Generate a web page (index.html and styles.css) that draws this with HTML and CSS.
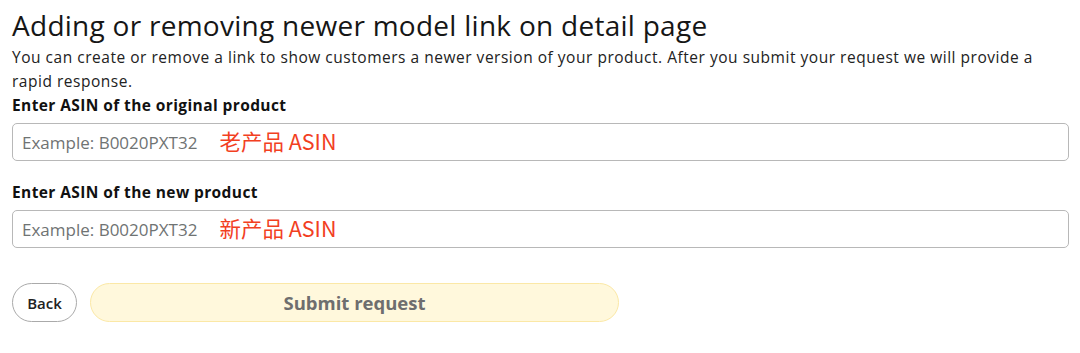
FILE: index.html
```html
<!DOCTYPE html>
<html>
<head>
<meta charset="utf-8">
<link rel="stylesheet" href="styles.css">
</head>
<body>
<div class="page">
  <h1 class="title">Adding or removing newer model link on detail page</h1>
  <p class="intro">You can create or remove a link to show customers a newer version of your product. After you submit your request we will provide a rapid response.</p>
  <div class="field">
    <label class="label">Enter ASIN of the original product</label>
    <div class="input">
      <span class="placeholder">Example: B0020PXT32</span>
      <span class="note">老产品 ASIN</span>
    </div>
  </div>
  <div class="field field-second">
    <label class="label">Enter ASIN of the new product</label>
    <div class="input">
      <span class="placeholder">Example: B0020PXT32</span>
      <span class="note">新产品 ASIN</span>
    </div>
  </div>
  <div class="actions">
    <button class="btn-back">Back</button>
    <button class="btn-submit">Submit request</button>
  </div>
</div>
</body>
</html>
```

FILE: styles.css
```css
html, body {
  margin: 0;
  padding: 0;
  background: #ffffff;
}
.page {
  padding: 7px 11px 0 12px;
  font-family: "Open Sans", "Noto Sans", sans-serif;
  color: #111;
}
.title {
  margin: 0 0 2px;
  font-size: 28px;
  font-weight: 400;
  line-height: 36px;
  letter-spacing: 0.27px;
  color: #161616;
}
.intro {
  margin: 0;
  font-size: 15.5px;
  line-height: 24px;
  letter-spacing: 0.52px;
  color: #222;
  padding-right: 20px;
}
.field {
  display: flex;
  flex-direction: column;
  margin-top: 1px;
}
.field-second {
  margin-top: 20px;
}
.label {
  font-size: 15.5px;
  font-weight: 700;
  line-height: 22px;
  letter-spacing: 0.4px;
  color: #111;
  margin-bottom: 7px;
}
.input {
  height: 38px;
  box-sizing: border-box;
  border: 1.5px solid #b8b8b8;
  border-radius: 5px;
  display: flex;
  align-items: center;
  padding-left: 9px;
  gap: 22px;
}
.placeholder {
  font-size: 17px;
  color: #6f7373;
}
.note {
  font-family: "Noto Sans CJK SC", "Noto Sans", sans-serif;
  font-size: 21.5px;
  color: #f2401f;
  margin-top: -3px;
}
.actions {
  margin-top: 35px;
  display: flex;
  gap: 13px;
}
.btn-back {
  width: 65px;
  height: 39px;
  border-radius: 20px;
  border: 1.5px solid #aaa;
  background: #fff;
  font-family: "Open Sans", sans-serif;
  font-size: 15px;
  font-weight: 600;
  color: #222;
  padding: 0;
}
.btn-submit {
  width: 529px;
  height: 39px;
  border-radius: 20px;
  border: 1.5px solid #fbe8a6;
  background: #fff8dc;
  font-family: "Open Sans", sans-serif;
  font-size: 18.5px;
  font-weight: 700;
  color: #6e6e6e;
  padding: 0;
}
```
